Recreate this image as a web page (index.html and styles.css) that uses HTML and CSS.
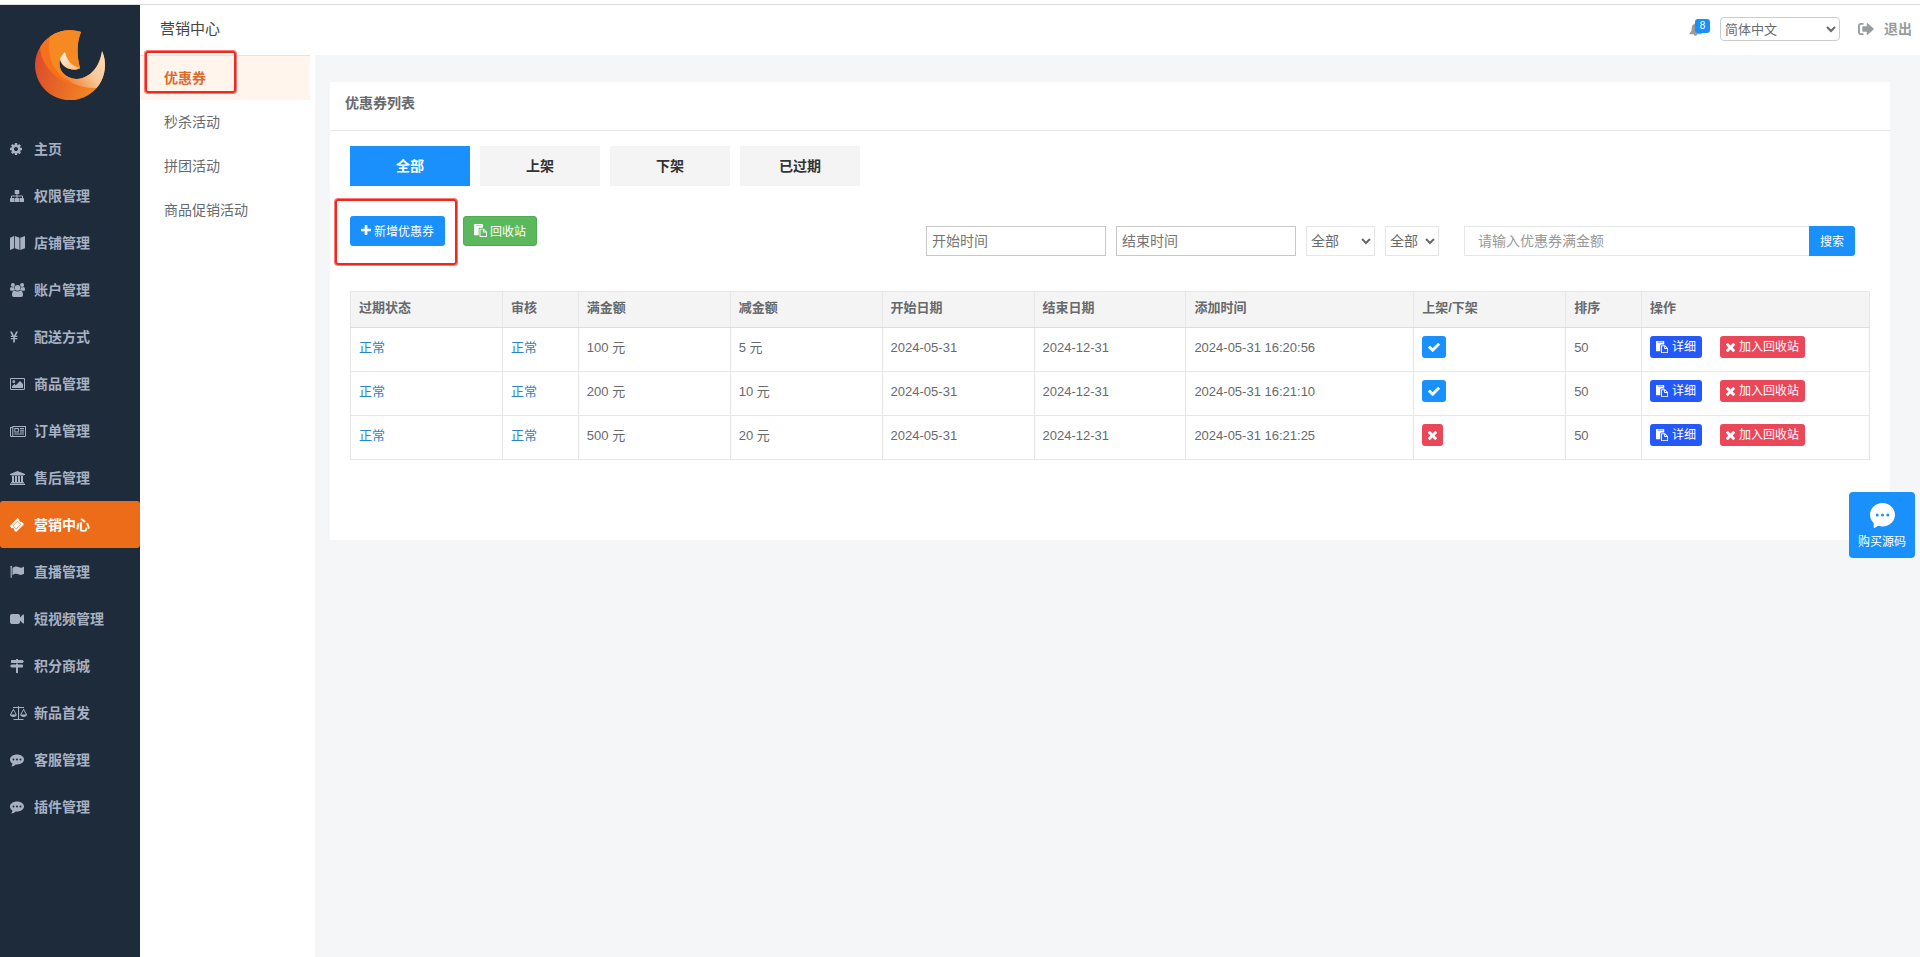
FILE: index.html
```html
<!DOCTYPE html>
<html lang="zh-CN">
<head>
<meta charset="utf-8">
<title>营销中心</title>
<link rel="stylesheet" href="styles.css">
</head>
<body>
<svg class="sprite" aria-hidden="true">
  <symbol id="i-cog" viewBox="128 128 1536 1536"><path d="M1152 896q0-106-75-181t-181-75-181 75-75 181 75 181 181 75 181-75 75-181zm512-109v222q0 12-8 23t-20 13l-185 28q-19 54-39 91 35 50 107 138 10 12 10 25t-9 23q-27 37-99 108t-94 71q-12 0-26-9l-138-108q-44 23-91 38-16 136-29 186-7 28-36 28h-222q-14 0-24.5-8.5t-11.5-21.5l-28-184q-49-16-90-37l-141 107q-10 9-25 9-14 0-25-11-126-114-165-168-7-10-7-23 0-12 8-23 15-21 51-66.5t54-70.5q-27-50-41-99l-183-27q-13-2-21-12.5t-8-23.5v-222q0-12 8-23t19-13l186-28q14-46 39-92-40-57-107-138-10-12-10-24 0-10 9-23 26-36 98.5-107.5t94.5-71.5q13 0 26 10l138 107q44-23 91-38 16-136 29-186 7-28 36-28h222q14 0 24.5 8.5t11.5 21.5l28 184q49 16 90 37l142-107q9-9 24-9 13 0 25 10 129 119 165 170 7 8 7 22 0 12-8 23-15 21-51 66.5t-54 70.5q26 50 41 98l183 28q13 2 21 12.5t8 23.5z"/></symbol>
  <symbol id="i-plus" viewBox="192 128 1408 1408"><path d="M1600 736v192q0 40-28 68t-68 28h-416v416q0 40-28 68t-68 28h-192q-40 0-68-28t-28-68v-416h-416q-40 0-68-28t-28-68v-192q0-40 28-68t68-28h416v-416q0-40 28-68t68-28h192q40 0 68 28t28 68v416h416q40 0 68 28t28 68z"/></symbol>
  <symbol id="i-times" viewBox="302 366 1188 1188"><path d="M1490 1322q0 40-28 68l-136 136q-28 28-68 28t-68-28l-294-294-294 294q-28 28-68 28t-68-28l-136-136q-28-28-28-68t28-68l294-294-294-294q-28-28-28-68t28-68l136-136q28-28 68-28t68 28l294 294 294-294q28-28 68-28t68 28l136 136q28 28 28 68t-28 68l-294 294 294 294q28 28 28 68z"/></symbol>
  <symbol id="i-check" viewBox="121 334 1550 1188"><path d="M1671 566q0 40-28 68l-724 724-136 136q-28 28-68 28t-68-28l-136-136-362-362q-28-28-28-68t28-68l136-136q28-28 68-28t68 28l294 295 656-657q28-28 68-28t68 28l136 136q28 28 28 68z"/></symbol>
  <symbol id="i-paste" viewBox="0 0 14 14"><path fill-rule="evenodd" d="M.7 0h8.200c.4 0 .7.300.7.700V4H6.500C5.700 4 5 4.600 5 5.400V12H.7c-.4 0-.7-.3-.7-.7V.7C0 .3.3 0 .7 0zM2 1v.7h6V1z"/><path fill-rule="evenodd" d="M6.600 5h4L14 8.400v4.900c0 .4-.3.7-.7.7H6.600c-.4 0-.7-.3-.7-.7V5.700c0-.4.3-.7.7-.7zM7 6v7h6V9.200h-2.800c-.4 0-.7-.3-.7-.7V6zM10.500 6.300v1.900h1.900z"/></symbol>
  <symbol id="i-sitemap" viewBox="0 0 17 14"><path d="M4.700 1.600c0-.4.3-.6.6-.6h3.400c.4 0 .6.300.6.600v2.800c0 .4-.3.600-.6.600H7.500v1.500H12c.6 0 1 .4 1 1V9h.4c.4 0 .6.300.6.600v2.800c0 .4-.3.600-.6.600h-3.300c-.4 0-.6-.3-.6-.6V9.600c0-.4.300-.6.600-.6H12V7.500H7.500V9h1c.4 0 .6.300.6.600v2.800c0 .4-.300.600-.600.600H5.400c-.4 0-.6-.3-.6-.6V9.600c0-.4.3-.6.600-.6h1.100V7.500H2V9h1.800c.4 0 .6.300.6.600v2.800c0 .4-.300.600-.600.600H.6c-.3 0-.6-.3-.6-.6V9.600C0 9.200.3 9 .6 9H1V7.500c0-.6.4-1 1-1h4.500V5H5.300c-.3 0-.6-.3-.6-.6z"/></symbol>
  <symbol id="i-map" viewBox="0 0 17 14"><path d="M0 1.800 4.200 0v12.200L0 14zM5 0l4.500 1.800V14L5 12.200zM10.300 1.800 15 0v12.200L10.300 14z"/></symbol>
  <symbol id="i-users" viewBox="0 0 17 14"><circle cx="2.900" cy="2" r="2"/><circle cx="12.100" cy="2" r="2"/><path d="M0 6.300C0 4.800.7 4 1.500 4c.8.6 2 .6 2.800 0-.3 1.200 0 2.200.7 3-.8 0-1.500.3-2 .8H1.200C.5 7.800 0 7.300 0 6.300zM15 6.300C15 4.800 14.300 4 13.500 4c-.8.6-2 .6-2.800 0 .3 1.200 0 2.200-.7 3 .8 0 1.500.3 2 .8h1.800c.7 0 1.200-.5 1.200-1.500z"/><circle cx="7.500" cy="4.800" r="2.900"/><path d="M2 12c0-2.800.8-4.500 2.700-4.500 1.700 1.400 3.900 1.400 5.600 0C12.200 7.500 13 9.200 13 12c0 1.300-.7 2-1.900 2H3.900C2.700 14 2 13.300 2 12z"/></symbol>
  <symbol id="i-yen" viewBox="0 0 17 14"><path d="M0 1.500h1.900L4 5.700l2.100-4.200H8L5.800 5.800h1.500v1.100H4.900v1.200h2.400v1.100H4.900v3.300H3.200V9.200H.8V8.100h2.400V6.900H.8V5.800h1.400z"/></symbol>
  <symbol id="i-image" viewBox="0 0 17 14"><path fill-rule="evenodd" d="M1.200 1h12.600c.7 0 1.200.5 1.200 1.200v9.600c0 .7-.5 1.200-1.200 1.200H1.200C.5 13 0 12.500 0 11.800V2.200C0 1.500.5 1 1.200 1zM1 2v10h13V2z"/><circle cx="3.800" cy="4.700" r="1.400"/><path d="M2 11V9.200L4.500 7l1.300 1.200L10 4l3 3v4z"/></symbol>
  <symbol id="i-news" viewBox="0 0 17 14"><path fill-rule="evenodd" d="M2.300 2H16v9.400c0 .9-.6 1.600-1.500 1.600h-13C.6 13 0 12.300 0 11.400V3h2.300zM3.300 3v9H15V3zM1 4v7.400c0 .8 1.300.8 1.300 0V4z"/><path fill-rule="evenodd" d="M4.300 4h4.600v4.500H4.300zm1 1v2.500h2.600V5zM10 4h4v1h-4zm0 1.800h4v1h-4zm0 1.800h4v1h-4zM4.300 9.600H14v1H4.300z"/></symbol>
  <symbol id="i-bank" viewBox="0 0 17 14"><path d="M7.500 0 15 3v1h-1c0 .3-.2.500-.5.500h-12C1.200 4.500 1 4.300 1 4H0V3zM2 5h2v6h1V5h2v6h1V5h2v6h1V5h2v6h.5c.3 0 .5.200.5.500v.5H1v-.5c0-.3.2-.5.500-.5H2zM.5 12.500h14c.3 0 .5.200.5.500v1H0v-1c0-.3.200-.5.500-.5z"/></symbol>
  <symbol id="i-ticket" viewBox="0 0 17 14"><path fill-rule="evenodd" d="m8.200.4 1.200 1.200c-.5 1.300.9 2.700 2.200 2.200l1.800 1.800c.4.4.4.9 0 1.300l-6.700 6.700c-.4.400-.9.400-1.300 0l-1.200-1.200c.5-1.300-.9-2.700-2.200-2.200L.3 8.700c-.4-.4-.4-.9 0-1.300L7 .4c.4-.4.800-.4 1.200 0zM7.500 2.900 2.700 7.700l3.500 3.500L11 6.400zM7.500 3.600l2.800 2.800-4.100 4.100-2.800-2.800z"/></symbol>
  <symbol id="i-flag" viewBox="0 0 17 14"><path d="M1.200.8c.8 0 1.200.9.600 1.600v10.300H.6V2.400C0 1.700.4.800 1.200.8zM2.500 2.800C6 .7 7.500 1.500 9 2.300c1.600.8 3 .4 5-.8v7.300c-2 1.200-3.600 1.400-5.200.6C7 8.500 5 8.400 2.500 10z"/></symbol>
  <symbol id="i-video" viewBox="0 0 17 14"><path d="M2 2h6c1.200 0 2 .8 2 2v1.500L13 2.600c.4-.4 1-.2 1 .4v8c0 .6-.6.8-1 .4L10 8.500V10c0 1.200-.8 2-2 2H2c-1.200 0-2-.8-2-2V4c0-1.200.8-2 2-2z"/></symbol>
  <symbol id="i-signs" viewBox="0 0 17 14"><path d="M6 0h2v1h4.500L14 2.500 12.500 4h-11C1.200 4 1 3.800 1 3.500v-2c0-.3.200-.5.500-.5H6zM6 4.600h2v1h4.500c.3 0 .5.200.5.500v2c0 .3-.2.500-.5.500H8V14H6V8.600H1.500L0 7.100l1.500-1.500H6z"/></symbol>
  <symbol id="i-scale" viewBox="0 0 17 14"><path fill-rule="evenodd" d="M8 1c.2-1.200 1-1.200 1.200 0H14v.9H9.100V13h4.400v1h-10v-1H8V1.900H3V1zM3.400 2.600l3.300 6C6.700 10 5.200 11 3.400 11S0 10 0 8.600zm0 1.700L1.100 8.500h4.600zM13.600 2.600l3.400 6c0 1.400-1.600 2.400-3.400 2.400s-3.300-1-3.300-2.400zm0 1.700-2.300 4.200h4.600z"/></symbol>
  <symbol id="i-comment" viewBox="0 0 17 14"><path fill-rule="evenodd" d="M7 1.500c3.900 0 7 2.200 7 5s-3.100 5-7 5l-1.300-.1C4.500 12.600 3 13.200 1.200 13.500c.7-.8 1.200-1.700 1.200-2.900C.9 9.600 0 8.200 0 6.500c0-2.800 3.100-5 7-5zM3.500 5.500a1 1 0 100 2 1 1 0 000-2zm3.500 0a1 1 0 100 2 1 1 0 000-2zm3.500 0a1 1 0 100 2 1 1 0 000-2z"/></symbol>
  <symbol id="i-bell" viewBox="0 0 14 14"><path d="M7 0c.6 0 1 .5.900 1.100C10 1.600 11 3.100 11 5c0 3 .9 4.800 2.500 6 .4.400.1 1-.5 1H8.700c0 1-.7 1.800-1.700 1.800S5.300 13 5.300 12H1c-.6 0-.9-.6-.5-1C2.100 9.800 3 8 3 5c0-1.900 1-3.400 3.100-3.900C6 .500 6.400 0 7 0z"/></symbol>
  <symbol id="i-out" viewBox="0 0 16 14"><path d="M5.500 1v1.800H3.200c-.8 0-1.300.5-1.300 1.300v5.800c0 .8.500 1.300 1.300 1.300h2.300V13H3c-1.900 0-3-1.100-3-3V4c0-1.900 1.100-3 3-3z"/><path d="M9.600 1.200 15.600 6.600c.3.300.3.500 0 .8l-6 5.400c-.4.300-.8.100-.8-.4V9.700H5c-.4 0-.7-.3-.7-.7V5c0-.4.300-.7.700-.7h3.800V1.600c0-.5.400-.7.800-.4z"/></symbol>
  <symbol id="i-chat" viewBox="0 0 25 25"><path fill-rule="evenodd" d="M12.500 0C19.400 0 25 5.200 25 11.700s-5.600 11.700-12.500 11.700c-1.500 0-3-.3-4.300-.7L4.500 25c-.4.200-.8 0-.8-.5v-4.600C1.400 17.800 0 15 0 11.700 0 5.200 5.600 0 12.500 0zM7.200 10.500a1.500 1.500 0 100 3 1.500 1.500 0 000-3zm5.300 0a1.500 1.500 0 100 3 1.500 1.500 0 000-3zm5.300 0a1.500 1.500 0 100 3 1.500 1.500 0 000-3z"/></symbol>
</svg>

<div class="topline"></div>
<div class="shell">
  <nav class="sidebar" aria-label="主菜单">
    <a class="logo" href="#" aria-label="首页">
      <svg viewBox="0 0 70 70">
        <defs>
          <linearGradient id="g-base" x1="0" y1=".5" x2="1" y2=".8"><stop offset="0" stop-color="#dd4c2b"/><stop offset=".85" stop-color="#f38722"/></linearGradient>
          <linearGradient id="g-cream" x1="1" y1="0" x2="0" y2=".8"><stop offset="0" stop-color="#fbe3c8"/><stop offset=".55" stop-color="#f8c795"/><stop offset="1" stop-color="#f17a28"/></linearGradient>
          <linearGradient id="g-leaf" x1="0" y1="0" x2="1" y2="1"><stop offset="0" stop-color="#fff6ec"/><stop offset="1" stop-color="#f8b87c"/></linearGradient>
          <clipPath id="c-body"><path d="M46 2C41 14 42 27 45 38 38 42 27 38 25 29 22 41 31 49 42 49 56 48 65 36 67 21A35 35 0 1 1 46 2z"/></clipPath>
        </defs>
        <g clip-path="url(#c-body)">
          <path fill="url(#g-base)" d="M0 0h70v70H0z"/>
          <path fill="#f5711c" d="M5 16C5 38 28 60 61 58L70 0H5z"/>
          <path fill="#f58a23" d="M15 6C11 24 18 40 30 49L48 40V0H15z"/>
          <path fill="url(#g-cream)" d="M72 15V58H61C46 59 34 53 27 44L40 46z"/>
        </g>
        <path fill="url(#g-leaf)" d="M30 22C32 31 37 36 45 38 38 42 27 38 25 29 26 26 28 24 30 22z"/>
      </svg>
    </a>
    <a class="nav" href="#"><svg class="cog"><use href="#i-cog"/></svg>主页</a>
    <a class="nav" href="#"><svg><use href="#i-sitemap"/></svg>权限管理</a>
    <a class="nav" href="#"><svg><use href="#i-map"/></svg>店铺管理</a>
    <a class="nav" href="#"><svg><use href="#i-users"/></svg>账户管理</a>
    <a class="nav" href="#"><svg><use href="#i-yen"/></svg>配送方式</a>
    <a class="nav" href="#"><svg><use href="#i-image"/></svg>商品管理</a>
    <a class="nav" href="#"><svg><use href="#i-news"/></svg>订单管理</a>
    <a class="nav" href="#"><svg><use href="#i-bank"/></svg>售后管理</a>
    <a class="nav active" href="#" aria-current="page"><svg><use href="#i-ticket"/></svg>营销中心</a>
    <a class="nav" href="#"><svg><use href="#i-flag"/></svg>直播管理</a>
    <a class="nav" href="#"><svg><use href="#i-video"/></svg>短视频管理</a>
    <a class="nav" href="#"><svg><use href="#i-signs"/></svg>积分商城</a>
    <a class="nav" href="#"><svg><use href="#i-scale"/></svg>新品首发</a>
    <a class="nav" href="#"><svg><use href="#i-comment"/></svg>客服管理</a>
    <a class="nav" href="#"><svg><use href="#i-comment"/></svg>插件管理</a>
  </nav>

  <div class="main">
    <header class="header">
      <h1>营销中心</h1>
      <div class="tools">
        <a class="bell" href="#" aria-label="通知"><svg><use href="#i-bell"/></svg><span class="badge">8</span></a>
        <select class="lang" aria-label="语言"><option>简体中文</option></select>
        <a class="logout" href="#"><svg><use href="#i-out"/></svg>退出</a>
      </div>
    </header>

    <div class="body">
      <nav class="submenu" aria-label="营销中心">
        <a class="sub active" href="#">优惠券<span class="mark mark-sub"></span></a>
        <a class="sub" href="#">秒杀活动</a>
        <a class="sub" href="#">拼团活动</a>
        <a class="sub" href="#">商品促销活动</a>
      </nav>

      <main class="content">
        <section class="panel">
          <h2>优惠券列表</h2>
          <div class="panel-body">
            <div class="tabs">
              <button class="tab active" type="button">全部</button>
              <button class="tab" type="button">上架</button>
              <button class="tab" type="button">下架</button>
              <button class="tab" type="button">已过期</button>
            </div>
            <div class="toolbar">
              <div class="actions">
                <div class="marked"><button class="btn btn-blue" type="button"><svg class="s10"><use href="#i-plus"/></svg>新增优惠券</button><span class="mark mark-add"></span></div>
                <button class="btn btn-green" type="button"><svg class="s13"><use href="#i-paste"/></svg>回收站</button>
              </div>
              <form class="filters">
                <input class="date" type="text" placeholder="开始时间" aria-label="开始时间">
                <input class="date" type="text" placeholder="结束时间" aria-label="结束时间">
                <select class="pick wide" aria-label="上架状态"><option>全部</option></select>
                <select class="pick" aria-label="过期状态"><option>全部</option></select>
                <div class="search">
                  <input type="text" placeholder="请输入优惠券满金额" aria-label="满金额">
                  <button type="button">搜索</button>
                </div>
              </form>
            </div>
            <table class="list">
              <colgroup><col class="w10"><col class="w5"><col class="w10"><col class="w10"><col class="w10"><col class="w10"><col class="w15"><col class="w10"><col class="w5"><col class="w15"></colgroup>
              <thead>
                <tr><th>过期状态</th><th>审核</th><th>满金额</th><th>减金额</th><th>开始日期</th><th>结束日期</th><th>添加时间</th><th>上架/下架</th><th>排序</th><th>操作</th></tr>
              </thead>
              <tbody>
                <tr>
                  <td><a href="#">正常</a></td><td><a href="#">正常</a></td><td>100 元</td><td>5 元</td><td>2024-05-31</td><td>2024-12-31</td><td>2024-05-31 16:20:56</td>
                  <td><button class="mini on" type="button" aria-label="已上架"><svg class="check"><use href="#i-check"/></svg></button></td><td>50</td>
                  <td><div class="ops"><button class="mini detail" type="button"><svg class="s12"><use href="#i-paste"/></svg>详细</button><button class="mini del" type="button"><svg class="s9"><use href="#i-times"/></svg>加入回收站</button></div></td>
                </tr>
                <tr>
                  <td><a href="#">正常</a></td><td><a href="#">正常</a></td><td>200 元</td><td>10 元</td><td>2024-05-31</td><td>2024-12-31</td><td>2024-05-31 16:21:10</td>
                  <td><button class="mini on" type="button" aria-label="已上架"><svg class="check"><use href="#i-check"/></svg></button></td><td>50</td>
                  <td><div class="ops"><button class="mini detail" type="button"><svg class="s12"><use href="#i-paste"/></svg>详细</button><button class="mini del" type="button"><svg class="s9"><use href="#i-times"/></svg>加入回收站</button></div></td>
                </tr>
                <tr>
                  <td><a href="#">正常</a></td><td><a href="#">正常</a></td><td>500 元</td><td>20 元</td><td>2024-05-31</td><td>2024-12-31</td><td>2024-05-31 16:21:25</td>
                  <td><button class="mini del" type="button" aria-label="已下架"><svg class="s9"><use href="#i-times"/></svg></button></td><td>50</td>
                  <td><div class="ops"><button class="mini detail" type="button"><svg class="s12"><use href="#i-paste"/></svg>详细</button><button class="mini del" type="button"><svg class="s9"><use href="#i-times"/></svg>加入回收站</button></div></td>
                </tr>
              </tbody>
            </table>
          </div>
        </section>
      </main>
    </div>
  </div>
</div>
<a class="chat" href="#"><svg><use href="#i-chat"/></svg>购买源码</a>
</body>
</html>
```

FILE: styles.css
```css
* { box-sizing: border-box; }

body {
  margin: 0;
  min-height: 100vh;
  display: flex;
  flex-direction: column;
  background: #fff;
  color: #676a6c;
  font: 13px/20px "Liberation Sans", "Noto Sans CJK SC", sans-serif;
}

a { color: inherit; text-decoration: none; }
button, input, select { font-family: inherit; color: inherit; margin: 0; }
button { cursor: pointer; border: 0; }
h1, h2 { margin: 0; }
svg { fill: currentColor; flex: none; display: block; }

.sprite { position: absolute; width: 0; height: 0; }
.topline { height: 5px; border-bottom: 1px solid #ddd; }
.shell { flex: 1; display: flex; }

/* Main menu */
.sidebar { flex: 0 0 140px; background: #1e2b3b; }
.logo { display: block; padding: 25px 35px; }
.logo svg { width: 70px; height: 70px; }
.nav {
  display: flex;
  align-items: center;
  gap: 7px;
  height: 47px;
  padding: 0 10px;
  border-radius: 3px;
  color: #a7b1c2;
  font-size: 14px;
  font-weight: 600;
}
.nav svg { width: 17px; height: 14px; }
.nav .cog { width: 12px; height: 12px; margin-right: 5px; }
.nav.active { background: #ec6c19; color: #fff; }

/* Header */
.main { flex: 1; min-width: 0; display: flex; flex-direction: column; }
.header {
  height: 50px;
  display: flex;
  align-items: center;
  justify-content: space-between;
  padding: 0 8px 2px 20px;
}
.header h1 { font-size: 15px; font-weight: 400; color: #444; }
.tools { display: flex; align-items: center; }
.bell { position: relative; width: 21px; margin-right: 10px; color: #999c9e; }
.bell svg { width: 13px; height: 13px; }
.badge {
  position: absolute;
  left: 6px;
  top: -4px;
  width: 15px;
  height: 14px;
  border-radius: 3px;
  background: #1a90fc;
  color: #fff;
  font-size: 10px;
  line-height: 14px;
  text-align: center;
}
.lang {
  width: 120px;
  height: 24px;
  border: 1px solid #ccc;
  border-radius: 4px;
  background: #fff;
  font-size: 13px;
}
.logout {
  display: flex;
  align-items: center;
  gap: 10px;
  margin-left: 18px;
  color: #999c9e;
  font-size: 14px;
  font-weight: 600;
}
.logout svg { width: 16px; height: 14px; }

/* Second-level menu */
.body { flex: 1; display: flex; }
.submenu { flex: 0 0 175px; padding-right: 5px; }
.sub {
  position: relative;
  display: block;
  padding: 0 24px;
  font-size: 14px;
  line-height: 44px;
}
.sub.active { border-top: 1px solid #e7e2de; background: #fff5ec; color: #dd6b2c; font-weight: 600; }

.mark {
  position: absolute;
  border: 2px solid #ee2a1f;
  border-radius: 3px;
  box-shadow: 0 0 0 1px #f77;
  pointer-events: none;
}
.mark-sub { left: 5px; top: -5px; width: 91px; height: 42px; }
.mark-add { left: -15px; top: -17px; width: 122px; height: 66px; }

/* Content */
.content { flex: 1; min-width: 0; background: #f5f6f8; padding: 27px 30px 27px 15px; }
.panel { background: #fff; }
.panel h2 {
  height: 49px;
  padding: 11px 15px 0;
  border-bottom: 1px solid #e7e7e7;
  font-size: 14px;
  font-weight: 600;
  line-height: 20px;
}
.panel-body { padding: 15px 20px 80px; }

.tabs { display: flex; gap: 10px; }
.tab {
  width: 120px;
  height: 40px;
  padding: 0 0 2px;
  background: #f4f4f4;
  color: #333;
  font-size: 14px;
  font-weight: 600;
}
.tab.active { background: #1a90fc; color: #fff; }

.toolbar { display: flex; justify-content: space-between; padding-right: 15px; margin: 30px 0 35px; }
.actions { display: flex; align-items: flex-start; gap: 18px; }
.marked { position: relative; }
.btn {
  display: flex;
  align-items: center;
  gap: 3px;
  height: 30px;
  padding: 0 10px 2px;
  border: 1px solid transparent;
  border-radius: 3px;
  color: #fff;
  font-size: 12px;
}
.btn-blue { background: #1a90fc; }
.btn-green { background: #5cb85c; border-color: #4cae4c; }
.s9 { width: 9px; height: 9px; }
.s10 { width: 10px; height: 10px; }
.s12 { width: 12px; height: 12px; }
.s13 { width: 13px; height: 13px; }
.check { width: 12px; height: 9px; }

.filters { display: flex; gap: 10px; margin-top: 10px; }
.filters input, .pick { height: 30px; font-size: 14px; border-radius: 0; background: #fff; }
.date { width: 180px; padding: 0 5px; border: 1px solid #c8c8c8; }
.pick { width: 54px; border: 1px solid #e5e6e7; }
.pick.wide { width: 69px; }
.search { display: flex; margin-left: 15px; }
.search input { width: 345px; padding: 0 13px; border: 1px solid #e5e6e7; border-right: 0; }
.search input::placeholder { color: #999; }
.search button {
  width: 46px;
  height: 30px;
  padding: 0 0 2px;
  border-radius: 0 3px 3px 0;
  background: #1a90fc;
  color: #fff;
  font-size: 12px;
}

.list { width: 100%; table-layout: fixed; border-collapse: collapse; }
.w5 { width: 5%; }
.w10 { width: 10%; }
.w15 { width: 15%; }
.list th, .list td { border: 1px solid #e7e7e7; text-align: left; vertical-align: top; }
.list th { padding: 6px 8px 9px; background: #f4f4f4; border-bottom-color: #ddd; font-weight: 600; }
.list td { height: 44px; padding: 8px; line-height: 24px; }
.list td a { color: #2a82d0; }
.ops { display: flex; gap: 18px; }
.mini {
  display: flex;
  align-items: center;
  gap: 4px;
  height: 22px;
  padding: 0 6px;
  border-radius: 3px;
  color: #fff;
  font-size: 12px;
  line-height: 18px;
}
.mini.on { background: #1a90fc; }
.mini.detail { background: #2558f8; }
.mini.del { background: #ea4759; }

.chat {
  position: fixed;
  right: 5px;
  top: 492px;
  width: 66px;
  height: 66px;
  padding-top: 11px;
  display: flex;
  flex-direction: column;
  align-items: center;
  gap: 4px;
  border-radius: 4px;
  background: #1a90fc;
  color: #fff;
  font-size: 12px;
}
.chat svg { width: 25px; height: 25px; }
```
